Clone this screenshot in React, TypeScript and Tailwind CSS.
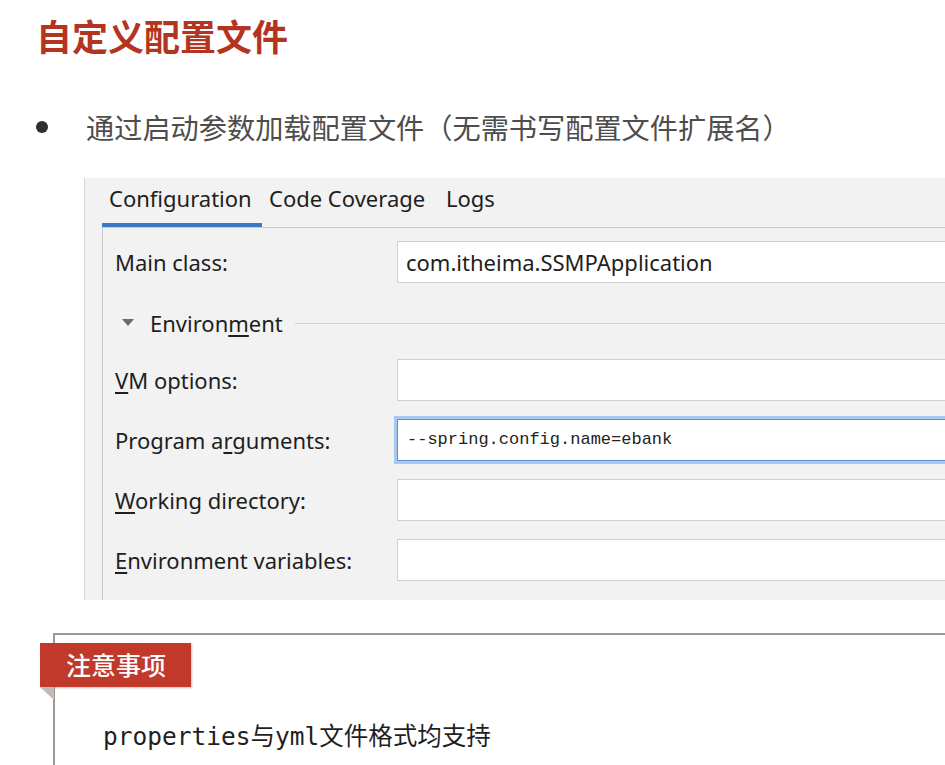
import React from "react";

const ui = { fontFamily: '"Noto Sans", "Open Sans", sans-serif' };
const cjk = { fontFamily: '"Noto Sans CJK SC", "Noto Sans", sans-serif' };

function Field({
  label,
  value,
  focused,
}: {
  label: React.ReactNode;
  value?: string;
  focused?: boolean;
}) {
  return (
    <div className="flex items-center h-[42px]">
      <div className="w-[294px] shrink-0 pl-[12px] text-[22px] text-[#1e1e1e]" style={ui}>
        {label}
      </div>
      <div
        className={
          "h-[42px] w-[600px] shrink-0 bg-white flex items-center " +
          (focused
            ? "border border-[#5b8fd6] outline-[3px] outline-solid outline-[#a9c8f0] pl-[9px]"
            : "border border-[#cfcfcf] pl-[8px]")
        }
      >
        {focused ? (
          <span
            className="text-[17px] text-[#222]"
            style={{ fontFamily: '"Liberation Mono", "DejaVu Sans Mono", monospace' }}
          >
            {value}
          </span>
        ) : (
          <span className="text-[22px] text-[#1e1e1e]" style={ui}>
            {value}
          </span>
        )}
      </div>
    </div>
  );
}

export default function App() {
  return (
    <div className="relative w-[945px] h-[765px] overflow-hidden bg-white">
      {/* Title */}
      <div
        className="pl-[36px] pt-[16px] h-[54px] text-[36px] leading-[38px] font-bold text-[#b3341f]"
        style={cjk}
      >
        自定义配置文件
      </div>

      {/* Bullet */}
      <div className="mt-[54px] flex items-center h-[38px]">
        <div className="ml-[36px] w-[12px] h-[12px] rounded-full bg-[#2f2f2f] shrink-0" />
        <div
          className="ml-[38px] text-[28.2px] text-[#4d4d4d] leading-[38px] whitespace-nowrap"
          style={cjk}
        >
          通过启动参数加载配置文件
          <span className="inline-block w-[1em] text-right">（</span>
          无需书写配置文件扩展名
          <span className="inline-block w-[1em] text-left">）</span>
        </div>
      </div>

      {/* IDE panel */}
      <div className="mt-[32px] ml-[84px] h-[422px] bg-[#f2f2f2] border-l border-[#d8d8d8] flex flex-col overflow-hidden">
        <div className="flex h-[49px] ml-[17px] text-[22px] text-[#1e1e1e]" style={ui}>
          <div className="w-[160px] flex flex-col">
            <div className="flex-1 flex items-center pl-[7px] pb-[4px]">Configuration</div>
            <div className="h-[4px] bg-[#3d77c2]" />
          </div>
          <div className="w-[177px] flex items-center pl-[7px] pb-[8px]">Code Coverage</div>
          <div className="flex items-center pl-[7px] pb-[8px]">Logs</div>
        </div>
        <div className="flex-1 ml-[17px] border-l border-t border-[#c9c9c9] pt-[13px]">
          <Field label="Main class:" value="com.itheima.SSMPApplication" />
          <div className="h-[76px] pt-[29px]">
            <div className="flex items-center h-[22px]">
              <svg width="12" height="8" viewBox="0 0 12 8" className="ml-[19px] shrink-0">
                <path d="M0 0 L12 0 L6 7 Z" fill="#6b6b6b" />
              </svg>
              <span className="ml-[16px] text-[22px] text-[#1e1e1e] shrink-0" style={ui}>
                Environ<span className="underline underline-offset-[3px]">m</span>ent
              </span>
              <div className="ml-[12px] h-px w-[700px] shrink-0 bg-[#d3d3d3]" />
            </div>
          </div>
          <div className="flex flex-col gap-[18px]">
            <Field
              label={
                <>
                  <span className="underline underline-offset-[3px]">V</span>M options:
                </>
              }
            />
            <Field
              label={
                <>
                  Program a<span className="underline underline-offset-[3px]">r</span>guments:
                </>
              }
              value="--spring.config.name=ebank"
              focused
            />
            <Field
              label={
                <>
                  <span className="underline underline-offset-[3px]">W</span>orking directory:
                </>
              }
            />
            <Field
              label={
                <>
                  <span className="underline underline-offset-[3px]">E</span>nvironment variables:
                </>
              }
            />
          </div>
        </div>
      </div>

      {/* Note box */}
      <div className="relative mt-[33px] ml-[53px] h-[200px] border-l-2 border-t-2 border-[#a3958f]">
        <div
          className="absolute left-[-15px] top-[8px] w-[151px] h-[44px] bg-[#c0392b] flex items-center pl-[26px] text-white text-[25px] font-medium shadow-[1px_1px_2px_rgba(0,0,0,0.25)]"
          style={cjk}
        >
          注意事项
        </div>
        <svg width="14" height="13" viewBox="0 0 14 13" className="absolute left-[-15px] top-[52px]">
          <path d="M0 0 L14 0 L14 13 Z" fill="#c4bbb8" />
        </svg>
        <div
          className="pt-[87px] pl-[48px] text-[24.5px] leading-[30px] text-[#1f1f1f]"
          style={{ fontFamily: '"DejaVu Sans Mono", "Noto Sans CJK SC", monospace' }}
        >
          properties与yml文件格式均支持
        </div>
      </div>
    </div>
  );
}
